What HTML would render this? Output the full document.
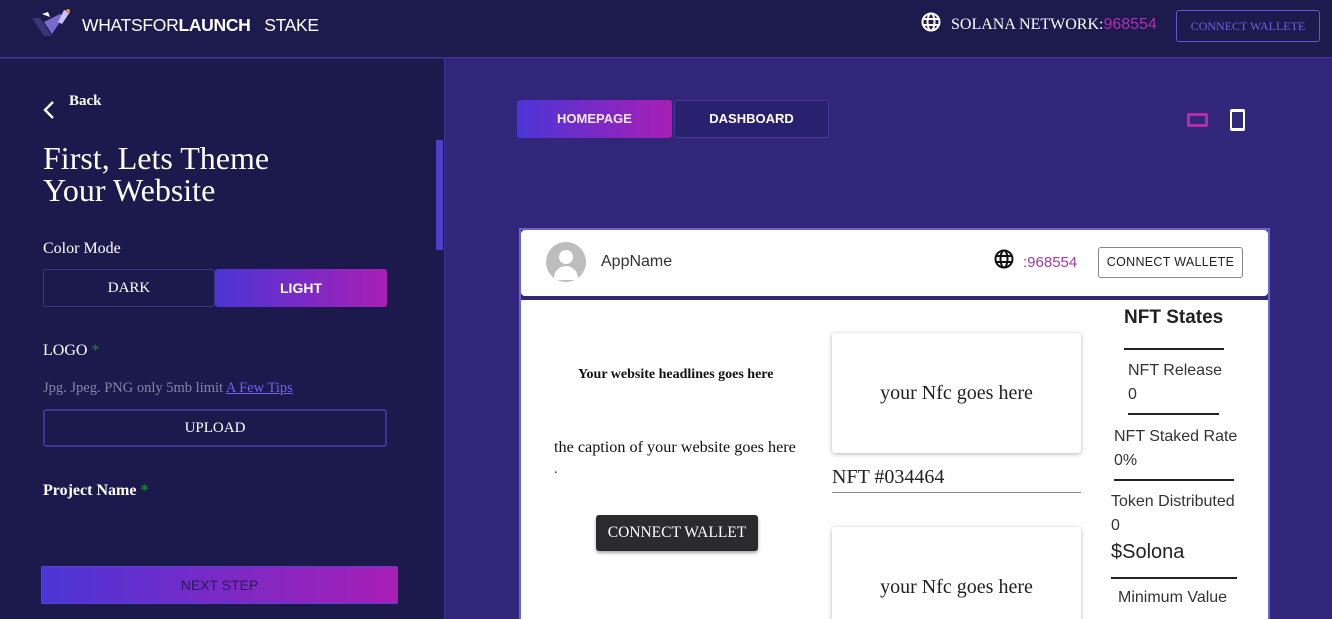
<!DOCTYPE html>
<html style="overflow:hidden;width:1332px;height:619px"><head><style>
*{margin:0;padding:0;box-sizing:border-box}
body{width:1332px;height:619px;overflow:hidden;background:#31267a;font-family:"Liberation Serif",serif;position:relative;color:#fff}
.a{position:absolute}
.sans{font-family:"Liberation Sans",sans-serif}
.grad{background:linear-gradient(90deg,#4b35d6,#a81fb6)}
</style></head><body>
<div class="a" style="left:0;top:0;width:1332px;height:619px;overflow:hidden">
<div class="a" style="left:0;top:0;width:1332px;height:58px;background:#1d1a4e;border-bottom:1px solid #433a95"></div>
<svg class="a" style="left:30px;top:8px" width="48" height="30" viewBox="0 0 48 30"><path d="M2 10 L14 28 L22 28 L10 10Z" fill="#3a3575"/><path d="M14 14 L22 26 L34 8 L30 6Z" fill="#7a6ad0"/><path d="M34 2 L40 4 L32 16 L28 14Z" fill="#c9c2ff"/><path d="M12 6 l6 -2 l2 5 z" fill="#fff"/><circle cx="38" cy="3" r="2" fill="#e58a3a"/></svg>
<div class="a sans" style="left:82px;top:15px;font-size:17.5px;letter-spacing:-0.3px">WHATSFOR<b>LAUNCH</b>&nbsp;&nbsp; STAKE</div>
<svg class="a" style="left:921px;top:12px" width="20" height="20" viewBox="0 0 20 20" fill="none" stroke="#fff" stroke-width="2"><circle cx="10" cy="10" r="8.5"/><ellipse cx="10" cy="10" rx="3.5" ry="8.5"/><path d="M2 7h16M2 13h16"/></svg>
<div class="a" style="left:951px;top:16px;font-size:16px">SOLANA NETWORK:<span class="sans" style="color:#b22fb0;font-size:16px">968554</span></div>
<div class="a" style="left:1176px;top:10px;width:144px;height:32px;border:1px solid #5e55d8;border-radius:3px;color:#6b62e0;font-size:12px;text-align:center;line-height:30px">CONNECT WALLETE</div>

<div class="a" style="left:0;top:59px;width:445px;height:560px;background:#1c1a4c;border-right:1px solid #3b3390"></div>
<div class="a" style="left:436px;top:140px;width:7px;height:110px;background:#4d40c6"></div>
<svg class="a" style="left:42px;top:99px" width="14" height="22" viewBox="0 0 14 22" fill="none" stroke="#fff" stroke-width="2.4"><path d="M11 3 L3 11 L11 19"/></svg>
<div class="a" style="left:69px;top:93px;font-size:15px;font-weight:bold">Back</div>
<div class="a" style="left:43px;top:142px;font-size:32px;line-height:32px">First, Lets Theme<br>Your Website</div>
<div class="a" style="left:43px;top:240px;font-size:16px">Color Mode</div>
<div class="a" style="left:43px;top:269px;width:172px;height:38px;border:1px solid #3e3680;border-radius:3px;text-align:center;line-height:36px;font-size:15px">DARK</div>
<div class="a grad sans" style="left:215px;top:269px;width:172px;height:38px;border-radius:3px;text-align:center;line-height:38px;font-size:14px;font-weight:bold">LIGHT</div>
<div class="a" style="left:43px;top:342px;font-size:16px">LOGO <span style="color:#1c8a2c">*</span></div>
<div class="a" style="left:43px;top:380px;font-size:14.5px;color:#8783a6">Jpg. Jpeg. PNG only 5mb limit <span style="color:#6d63f0;text-decoration:underline">A Few Tips</span></div>
<div class="a" style="left:43px;top:409px;width:344px;height:38px;border:2px solid #3e3492;border-radius:3px;text-align:center;line-height:34px;font-size:15px">UPLOAD</div>
<div class="a" style="left:43px;top:482px;font-size:16px;font-weight:bold">Project Name <span style="color:#1c8a2c">*</span></div>
<div class="a grad sans" style="left:41px;top:566px;width:357px;height:38px;border-radius:2px;border:1px solid #5446c8;text-align:center;line-height:36px;font-size:14px;color:#2a1a5a;font-weight:500">NEXT STEP</div>

<div class="a grad sans" style="left:517px;top:100px;width:155px;height:38px;border-radius:3px;text-align:center;line-height:38px;font-size:13px;font-weight:bold;color:#f5e8ff">HOMEPAGE</div>
<div class="a sans" style="left:674px;top:100px;width:155px;height:38px;border:1px solid #453a96;border-radius:3px;background:#2a2070;text-align:center;line-height:36px;font-size:13px;font-weight:bold">DASHBOARD</div>
<div class="a" style="left:1187px;top:113px;width:21px;height:14px;border:3px solid #b42cb0;border-radius:2px"></div>
<div class="a" style="left:1230px;top:109px;width:15px;height:22px;background:#fff;border-radius:2px"><div style="margin:3px 2px;width:11px;height:16px;background:#31267a"></div></div>

<div class="a" style="left:519px;top:228px;width:751px;height:400px;border:2px solid #6d64d8;background:#31267a"></div>
<div class="a" style="left:521px;top:230px;width:747px;height:66px;background:#fff;border-radius:4px;color:#222"></div>
<div class="a" style="left:546px;top:242px;width:40px;height:40px;border-radius:50%;background:#bdbdbd;overflow:hidden"><div style="position:absolute;left:13px;top:8px;width:14px;height:14px;border-radius:50%;background:#fff"></div><div style="position:absolute;left:8px;top:24px;width:24px;height:14px;border-radius:12px 12px 0 0;background:#fff"></div></div>
<div class="a sans" style="left:601px;top:253px;font-size:16px;color:#333">AppName</div>
<svg class="a" style="left:994px;top:249px" width="20" height="20" viewBox="0 0 20 20" fill="none" stroke="#111" stroke-width="2"><circle cx="10" cy="10" r="8.5"/><ellipse cx="10" cy="10" rx="3.5" ry="8.5"/><path d="M2 7h16M2 13h16"/></svg>
<div class="a sans" style="left:1023px;top:254px;font-size:15px;color:#a63aa4">:968554</div>
<div class="a sans" style="left:1098px;top:247px;width:145px;height:31px;border:1px solid #888;border-radius:3px;text-align:center;line-height:29px;font-size:12.5px;color:#222;letter-spacing:0.3px">CONNECT WALLETE</div>

<div class="a" style="left:521px;top:300px;width:747px;height:330px;background:#fff;color:#111"></div>
<div class="a" style="left:578px;top:367px;font-size:14px;font-weight:bold;color:#111">Your website headlines goes here</div>
<div class="a" style="left:554px;top:438px;font-size:16.2px;color:#111">the caption of your website goes here</div>
<div class="a" style="left:554px;top:462px;font-size:14px;color:#111">.</div>
<div class="a" style="left:596px;top:515px;width:162px;height:36px;background:#2b2b2e;border-radius:3px;box-shadow:0 2px 3px rgba(0,0,0,.35);text-align:center;line-height:36px;font-size:15.5px;color:#fff">CONNECT WALLET</div>
<div class="a" style="left:832px;top:333px;width:249px;height:120px;background:#fff;border-radius:3px;box-shadow:0 1px 4px rgba(0,0,0,.3);text-align:center;line-height:120px;font-size:20px;color:#222">your Nfc goes here</div>
<div class="a" style="left:832px;top:466px;width:249px;height:27px;border-bottom:1px solid #888;font-size:20px;color:#222">NFT #034464</div>
<div class="a" style="left:832px;top:527px;width:249px;height:120px;background:#fff;border-radius:3px;box-shadow:0 1px 4px rgba(0,0,0,.3);text-align:center;line-height:120px;font-size:20px;color:#222">your Nfc goes here</div>
<div class="sans a" style="left:1124px;top:307px;font-size:19px;font-weight:bold;color:#222">NFT States</div>
<div class="a" style="left:1124px;top:348px;width:100px;border-top:2px solid #222"></div>
<div class="sans a" style="left:1128px;top:359px;font-size:16px;color:#333;line-height:24px">NFT Release<br>0</div>
<div class="a" style="left:1128px;top:413px;width:91px;border-top:2px solid #222"></div>
<div class="sans a" style="left:1114px;top:425px;font-size:16px;color:#333;line-height:24px">NFT Staked Rate<br>0%</div>
<div class="a" style="left:1114px;top:479px;width:120px;border-top:2px solid #222"></div>
<div class="sans a" style="left:1111px;top:490px;font-size:16px;color:#333;line-height:24px">Token Distributed<br>0</div>
<div class="sans a" style="left:1111px;top:541px;font-size:20px;font-weight:500;color:#222">$Solona</div>
<div class="a" style="left:1111px;top:577px;width:126px;border-top:2px solid #222"></div>
<div class="sans a" style="left:1118px;top:589px;font-size:16px;color:#333">Minimum Value</div>
</div>
</body></html>
